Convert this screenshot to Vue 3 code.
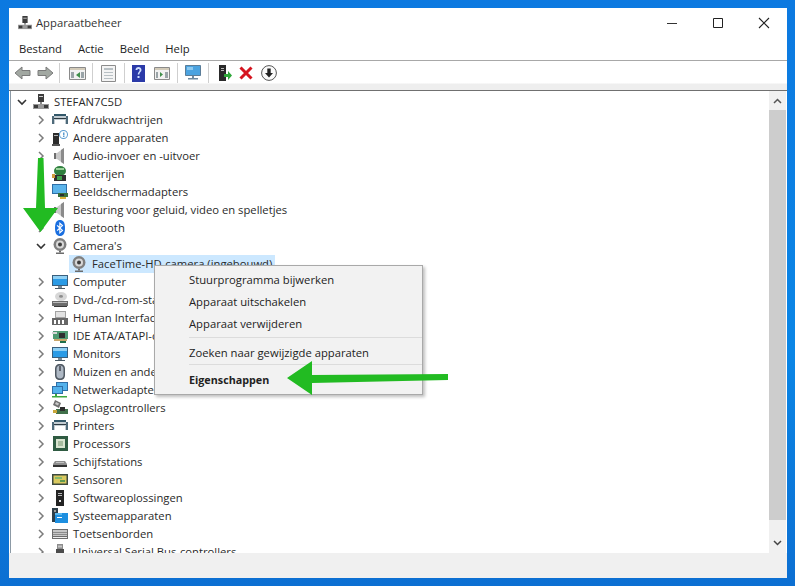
<script setup>
const r = (x, y, w, h) => `M${x} ${y}h${w}v${h}h${-w}z`

const monitor = [
  ['#3a5f7d', r(0, 1, 16, 11)],
  ['#2b9be6', r(1, 2, 14, 9)],
  ['#8fd0f4', r(1, 2, 14, 3)],
  ['#7a8a96', r(6, 12, 4, 2)],
  ['#4a5a66', r(3, 14, 10, 1)],
]
const speaker = [
  ['#c9c9c9', 'M12 0L5 5H2v6h3l7 5z'],
  ['#8b8b8b', 'M12 0v16l-3-2V2z'],
  ['#6f6f6f', r(2, 5, 2, 6)],
]
const camera = [
  ['#7f7f7f', 'M8 0a6.500 6.500 0 1 1 0 13a6.500 6.500 0 1 1 0-13z'],
  ['#d8d8d8', 'M8 2.500a4 4 0 1 1 0 8a4 4 0 1 1 0-8z'],
  ['#3d3d3d', 'M8 4.500a2 2 0 1 1 0 4a2 2 0 1 1 0-4z'],
  ['#6c6c6c', r(7, 13, 2, 1.500)],
  ['#6c6c6c', r(4, 14.500, 8, 1.500)],
]
const printer = [
  ['#33586a', r(2, 2, 12, 2)],
  ['#c2ccd2', r(0, 4, 16, 8)],
  ['#4e6a7a', r(0, 4, 2, 8)],
  ['#4e6a7a', r(14, 4, 2, 8)],
  ['#ffffff', r(3, 8, 10, 5)],
  ['#2e3a42', r(2, 6, 12, 1)],
]

const icons = {
  root: [
    ['#3c3c3c', r(5, 0, 6, 8)],
    ['#8a8a8a', r(7, 8, 2, 2)],
    ['#9a9a9a', r(0, 10, 16, 5)],
    ['#3c3c3c', r(1, 11, 4, 3)],
    ['#3c3c3c', r(11, 11, 4, 3)],
    ['#d0d0d0', r(6, 2, 4, 1)],
  ],
  printer,
  unknown: [
    ['#2c2c2c', r(1, 3, 6, 11)],
    ['#555555', r(0, 14, 8, 2)],
    ['#b4b4b4', r(2, 5, 4, 1)],
    ['#5b9bd0', 'M11.500 0a4.500 4.500 0 1 1 0 9a4.500 4.500 0 1 1 0-9zM11.500 1a3.500 3.500 0 1 0 0 7a3.500 3.500 0 1 0 0-7z'],
    ['#5b9bd0', r(11, 2.500, 1.500, 3)],
    ['#5b9bd0', r(11, 6, 1.500, 1)],
  ],
  speaker,
  battery: [
    ['#2f7f3e', 'M8 0a6 5 0 1 1 0 10a6 5 0 1 1 0-10z'],
    ['#9ad29a', r(4, 2, 8, 2)],
    ['#2f2f2f', r(2, 9, 12, 6)],
    ['#d09a3a', r(0, 8, 3, 4)],
    ['#3fa04a', r(5, 10, 5, 4)],
  ],
  adapter: [
    ['#2f6fa8', r(0, 0, 15, 10)],
    ['#5cb4ea', r(1, 1, 13, 8)],
    ['#39703c', r(6, 9, 10, 4)],
    ['#d8b23a', r(8, 13, 6, 2)],
    ['#2d2d2d', r(8, 10, 4, 2)],
  ],
  bluetooth: [
    ['#1a6fe0', 'M8 0c3 0 5 2 5 8s-2 8-5 8s-5-2-5-8s2-8 5-8z'],
    ['#ffffff', 'M7.300 2l4 3.400L8.700 8l2.600 2.600l-4 3.400V9.400L5.400 11l-.7-.8L7 8L4.700 5.800l.7-.8l1.900 1.600zM8.400 4.500v2.300l1.300-1.100zM8.400 9.200v2.300l1.300-1.200z'],
  ],
  camera,
  computer: monitor,
  dvd: [
    ['#d7d7d7', 'M9 0a6 4.500 0 1 1 0 9a6 4.500 0 1 1 0-9z'],
    ['#8d8d8d', 'M9 3a2 1.400 0 1 1 0 2.800a2 1.400 0 1 1 0-2.800z'],
    ['#6d6d6d', r(0, 9, 16, 5)],
    ['#bcbcbc', r(1, 10, 14, 1)],
    ['#3a3a3a', r(2, 14, 13, 1)],
  ],
  hid: [
    ['#a3a3a3', r(3, 1, 11, 7)],
    ['#e2e2e2', r(4, 2, 9, 5)],
    ['#676767', r(0, 8, 16, 7)],
    ['#ffffff', r(2, 10, 2, 4)],
    ['#ffffff', r(6, 10, 2, 4)],
    ['#ffffff', r(10, 10, 2, 4)],
  ],
  ide: [
    ['#4f9a72', r(1, 3, 15, 8)],
    ['#2f2f2f', r(7, 5, 6, 5)],
    ['#c9a66a', r(2, 11, 13, 2)],
    ['#d6d6d6', r(0, 4, 5, 2)],
    ['#1f6f4a', r(8, 13, 6, 2)],
  ],
  monitor,
  mouse: [
    ['#4f5862', 'M8 0c3.500 0 5 2 5 5v6c0 3-1.500 5-5 5s-5-2-5-5V5c0-3 1.500-5 5-5z'],
    ['#aeb8c4', 'M8 1.500c2.300 0 3.500 1.500 3.500 3.500v6c0 2-1.200 3.500-3.500 3.500s-3.500-1.500-3.500-3.500V5c0-2 1.200-3.500 3.500-3.500z'],
    ['#4a4f58', r(7.200, 2, 1.600, 5)],
  ],
  network: [
    ['#2f6fa8', r(4, 0, 12, 9)],
    ['#53b2ec', r(5, 1, 10, 7)],
    ['#2f6fa8', r(0, 4, 11, 8)],
    ['#53b2ec', r(1, 5, 9, 6)],
    ['#3da83d', r(3, 12, 2, 2)],
    ['#3da83d', r(0, 14, 15, 1.500)],
  ],
  storage: [
    ['#6f6f6f', 'M3 0l6 3l-2 5l-6-3z'],
    ['#c8c8c8', 'M4 2l3 1.500l-1 2l-3-1.500z'],
    ['#40704a', r(4, 9, 12, 5)],
    ['#2d2d2d', r(8, 7, 5, 4)],
    ['#c8a63a', r(1, 10, 4, 3)],
  ],
  cpu: [
    ['#2f5b42', r(1, 0, 15, 15)],
    ['#d9e4d0', r(4, 3, 9, 9)],
    ['#a7bca0', r(6, 5, 5, 5)],
  ],
  drive: [
    ['#8e8e8e', 'M3 7h10l2 3v3H1v-3z'],
    ['#333333', r(1, 11, 14, 2)],
    ['#c2c2c2', r(4, 8, 8, 1)],
  ],
  sensor: [
    ['#3d4a3e', r(0, 2, 16, 11)],
    ['#d9c95f', r(1.500, 3.500, 13, 8)],
    ['#86b86a', r(3, 5, 7, 2)],
    ['#5f9a50', r(8, 8, 5, 2)],
  ],
  software: [
    ['#232323', r(4, 0, 8, 16)],
    ['#b8b8b8', r(6, 3, 4, 1)],
    ['#b8b8b8', r(6, 5, 4, 1)],
    ['#e8e8e8', r(7, 10, 2, 2)],
  ],
  system: [
    ['#2f3f4a', r(0, 0, 6, 14)],
    ['#9a9a9a', r(2, 2, 2, 2)],
    ['#1d8fe0', r(3, 5, 13, 10)],
    ['#5ab8f0', r(3, 5, 7, 2)],
    ['#ffffff', r(5, 9, 5, 1)],
  ],
  keyboard: [
    ['#6d6d6d', r(0, 3, 16, 10)],
    ['#c7c7c7', r(1, 4, 14, 6)],
    ['#8c8c8c', r(1, 6, 14, 1)],
    ['#8c8c8c', r(1, 8, 14, 1)],
    ['#efefef', r(1, 11, 14, 1)],
  ],
  usb: [
    ['#8c8c8c', r(5, 0, 6, 5)],
    ['#ffffff', r(6.500, 1.500, 1, 2)],
    ['#ffffff', r(8.500, 1.500, 1, 2)],
    ['#4c4c4c', r(4, 5, 8, 11)],
  ],
}

const rows = [
  { level: 0, open: true, icon: 'root', label: 'STEFAN7C5D' },
  { label: 'Afdrukwachtrijen', icon: 'printer' },
  { label: 'Andere apparaten', icon: 'unknown' },
  { label: 'Audio-invoer en -uitvoer', icon: 'speaker' },
  { label: 'Batterijen', icon: 'battery' },
  { label: 'Beeldschermadapters', icon: 'adapter' },
  { label: 'Besturing voor geluid, video en spelletjes', icon: 'speaker' },
  { label: 'Bluetooth', icon: 'bluetooth' },
  { label: "Camera's", icon: 'camera', open: true },
  { level: 2, selected: true, label: 'FaceTime-HD-camera (ingebouwd)', icon: 'camera' },
  { label: 'Computer', icon: 'computer' },
  { label: 'Dvd-/cd-rom-stations', icon: 'dvd' },
  { label: 'Human Interface Devices', icon: 'hid' },
  { label: 'IDE ATA/ATAPI-controllers', icon: 'ide' },
  { label: 'Monitors', icon: 'monitor' },
  { label: 'Muizen en andere aanwijsapparaten', icon: 'mouse' },
  { label: 'Netwerkadapters', icon: 'network' },
  { label: 'Opslagcontrollers', icon: 'storage' },
  { label: 'Printers', icon: 'printer' },
  { label: 'Processors', icon: 'cpu' },
  { label: 'Schijfstations', icon: 'drive' },
  { label: 'Sensoren', icon: 'sensor' },
  { label: 'Softwareoplossingen', icon: 'software' },
  { label: 'Systeemapparaten', icon: 'system' },
  { label: 'Toetsenborden', icon: 'keyboard' },
  { label: 'Universal Serial Bus-controllers', icon: 'usb' },
].map((row) => ({ level: 1, ...row }))

const menus = ['Bestand', 'Actie', 'Beeld', 'Help']
</script>

<template>
  <div class="desktop">
    <div class="window">
      <header class="titlebar">
        <svg class="title-icon" width="14" height="16" viewBox="0 0 16 16">
          <path v-for="(p, i) in icons.root" :key="i" :fill="p[0]" :d="p[1]" />
        </svg>
        <span class="title">Apparaatbeheer</span>
        <div class="controls">
          <svg width="46" height="12" viewBox="0 0 46 12"><path d="M18 6.500h10" stroke="#333" fill="none" /></svg>
          <svg width="46" height="12" viewBox="0 0 46 12"><path d="M18.500 1.500h9v9h-9z" stroke="#222" fill="none" /></svg>
          <svg width="46" height="12" viewBox="0 0 46 12"><path d="M18 1l10 10M28 1L18 11" stroke="#222" fill="none" stroke-width="1.100" /></svg>
        </div>
      </header>

      <nav class="menubar">
        <span v-for="m in menus" :key="m">{{ m }}</span>
      </nav>

      <div class="toolbar">
        <svg class="tool t-back" width="17" height="16" viewBox="0 0 17 16"><path fill="#a2a8a2" stroke="#7a7a7a" d="M1 8l7-6v3.500h8v5H8V14z" /></svg>
        <svg class="tool t-fwd" width="17" height="16" viewBox="0 0 17 16"><path fill="#a2a8a2" stroke="#7a7a7a" d="M16 8L9 2v3.500H1v5h8V14z" /></svg>
        <i class="sep s1"></i>
        <svg class="tool t-a" width="17" height="15" viewBox="0 0 17 15"><path fill="#f2f2f2" stroke="#8a8a8a" d="M.5 1.500h16v12H.5z" /><path fill="#b4a47f" d="M1 2h15v2H1z" opacity=".5" /><path fill="#3f8f4a" d="M11 6L7 9l4 3z" /><path fill="#9aa4a8" d="M2 6h3v6H2zM12 6h3v6h-3z" /></svg>
        <i class="sep s2"></i>
        <svg class="tool t-b" width="15" height="17" viewBox="0 0 15 17"><path fill="#f4f4f4" stroke="#8c8c8c" d="M.5.500h14v16H.5z" /><path fill="#b8c0c4" d="M3 3h9v2H3zM3 7h9v1H3zM3 10h9v1H3zM3 13h9v1H3z" /></svg>
        <i class="sep s3"></i>
        <svg class="tool t-help" width="13" height="17" viewBox="0 0 13 17"><path fill="#2b3aa8" d="M0 0h13v17H0z" /><path fill="#cfe0ff" d="M5.500 11h2v2h-2zM3.500 5c0-4 6-4 6 0c0 2-2 2-2.200 4.500H5.700C5.800 7 7.700 6.500 7.700 5c0-1.500-2.400-1.500-2.400 0z" /></svg>
        <svg class="tool t-c" width="16" height="15" viewBox="0 0 16 15"><path fill="#f2f2f2" stroke="#8a8a8a" d="M.5 1.500h15v12H.5z" /><path fill="#b4a47f" d="M1 2h14v2H1z" opacity=".5" /><path fill="#3f8f4a" d="M6 6l3 2.500L6 11z" /><path fill="#9aa4a8" d="M2 6h2v6H2zM11 6h3v6h-3z" /></svg>
        <i class="sep s4"></i>
        <svg class="tool t-d" width="16" height="16" viewBox="0 0 16 16"><path fill="#4ba3e0" stroke="#5b7d98" d="M.5.500h15v10H.5z" /><path fill="#8cc9f0" d="M2 2h6v3H2z" /><path fill="#6d8aa0" d="M7 11h2v2H7zM3 13h10v1.500H3z" /></svg>
        <i class="sep s5"></i>
        <svg class="tool t-e" width="14" height="16" viewBox="0 0 14 16"><path fill="#2a2a2a" d="M1 0h7v16H1z" /><path fill="#b8b8b8" d="M3 3h3v1H3zM3 5h3v1H3z" /><path fill="#2fa83a" d="M6 9h4V6l4 4.500L10 15v-3H6z" /></svg>
        <svg class="tool t-x" width="14" height="14" viewBox="0 0 14 14"><path stroke="#d5141f" stroke-width="3" fill="none" d="M1.500 1.500l11 11M12.500 1.500l-11 11" /></svg>
        <svg class="tool t-dl" width="16" height="16" viewBox="0 0 16 16"><circle cx="8" cy="8" r="7.400" fill="#fafafa" stroke="#555" /><path fill="#222" d="M6.300 3.500h3.400V8H12l-4 4.500L4 8h2.300z" /></svg>
      </div>

      <main class="content">
        <div class="tree">
          <div v-for="row in rows" :key="row.label" class="row" :class="'level-' + row.level">
            <span class="toggle">
              <svg v-if="row.open" width="10" height="10" viewBox="0 0 10 10"><path d="M1 3l4 4l4-4" fill="none" stroke="#333" stroke-width="1.600" /></svg>
              <svg v-else-if="row.level === 1" width="10" height="10" viewBox="0 0 10 10"><path d="M3 1l4 4l-4 4" fill="none" stroke="#7c7c7c" stroke-width="1.500" /></svg>
            </span>
            <span class="item" :class="{ selected: row.selected }">
              <svg width="16" height="16" viewBox="0 0 16 16">
                <path v-for="(p, i) in icons[row.icon]" :key="i" :fill="p[0]" :d="p[1]" />
              </svg>
              <span class="label">{{ row.label }}</span>
            </span>
          </div>
        </div>

        <div class="scrollbar">
          <div class="sb-btn up"><svg width="9" height="6" viewBox="0 0 9 6"><path d="M1 5l3.500-3.500L8 5" fill="none" stroke="#555" stroke-width="1.500" /></svg></div>
          <div class="thumb"></div>
          <div class="sb-space"></div>
          <div class="sb-btn down"><svg width="9" height="6" viewBox="0 0 9 6"><path d="M1 1l3.500 3.500L8 1" fill="none" stroke="#444" stroke-width="1.500" /></svg></div>
        </div>

        <div class="context-menu">
          <div class="mi">Stuurprogramma bijwerken</div>
          <div class="mi">Apparaat uitschakelen</div>
          <div class="mi">Apparaat verwijderen</div>
          <hr class="hr-a" />
          <div class="mi">Zoeken naar gewijzigde apparaten</div>
          <hr class="hr-b" />
          <div class="mi strong">Eigenschappen</div>
        </div>
      </main>

      <footer class="statusbar"></footer>
    </div>

    <svg class="arrow arrow-down" width="36" height="76" viewBox="0 0 36 76"><path fill="#22bb22" d="M15 0h5.500l1.500 50h13L17.500 74L0 50h13z" /></svg>
    <svg class="arrow arrow-left" width="162" height="36" viewBox="0 0 162 36"><path fill="#22bb22" d="M0 18L25 1v14l136-1v6L25 23v12z" /></svg>
  </div>
</template>

<style>
html, body { margin: 0; }
</style>

<style scoped>
.desktop {
  position: relative;
  width: 795px;
  height: 586px;
  box-sizing: border-box;
  padding: 8px 8px 8px 9px;
  overflow: hidden;
  background: linear-gradient(180deg, #0c79e0 0%, #0b86e6 60%, #0c6fd2 100%);
  font-family: "Open Sans", "Noto Sans", sans-serif;
  font-size: 11.25px;
  color: #222;
}
.window {
  display: flex;
  flex-direction: column;
  height: 570px;
  background: #fff;
}
.titlebar {
  display: flex;
  align-items: center;
  height: 29px;
  padding-left: 9px;
  flex: none;
}
.title-icon { margin-right: 4px; }
.title { color: #333; }
.controls {
  display: flex;
  margin-left: auto;
}
.menubar {
  display: flex;
  gap: 16px;
  align-items: center;
  height: 23px;
  padding: 0 0 0 10px;
  flex: none;
  border-bottom: 1px solid #a8a8a8;
}
.toolbar {
  display: flex;
  align-items: center;
  flex: none;
  height: 29px;
  padding-left: 5px;
  border-bottom: 1px solid #707070;
  background: linear-gradient(180deg, #fff 0, #fff 22px, #eeeeee 23px);
}
.tool { flex: none; margin-bottom: 5px; }
.t-fwd { margin-left: 6px; }
.sep {
  flex: none;
  width: 1px;
  height: 20px;
  margin-bottom: 5px;
  background: #cfcfcf;
}
.s1 { margin-left: 5px; }
.t-a { margin-left: 9px; }
.s2 { margin-left: 6px; }
.t-b { margin-left: 8px; }
.s3 { margin-left: 8px; }
.t-help { margin-left: 7px; }
.t-c { margin-left: 9px; }
.s4 { margin-left: 7px; }
.t-d { margin-left: 7px; }
.s5 { margin-left: 7px; }
.t-e { margin-left: 9px; }
.t-x { margin-left: 7px; }
.t-dl { margin-left: 8px; }

.content {
  position: relative;
  display: flex;
  flex: 1;
  min-height: 0;
  margin: 0 1px;
  border-left: 1px solid #8c9aa6;
  overflow: hidden;
}
.tree {
  flex: 1;
  min-width: 0;
  padding-top: 2px;
}
.row {
  display: flex;
  align-items: center;
  height: 18px;
  white-space: nowrap;
}
.level-0 { padding-left: 3px; }
.level-1 { padding-left: 22px; }
.level-2 { padding-left: 41px; }
.toggle {
  display: flex;
  align-items: center;
  justify-content: center;
  flex: none;
  width: 16px;
}
.item {
  display: flex;
  align-items: center;
  gap: 5px;
  height: 18px;
  margin-left: 3px;
}
.selected {
  margin-left: 1px;
  padding: 0 3px 0 2px;
  background: #cce8ff;
}
.label {
  padding-bottom: 2px;
  color: #2a2a2a;
}

.scrollbar {
  display: flex;
  flex-direction: column;
  flex: none;
  width: 17px;
  background: #f0f0f0;
}
.sb-btn {
  display: flex;
  align-items: center;
  justify-content: center;
  flex: none;
}
.up { height: 19px; }
.down { height: 20px; }
.thumb {
  flex: none;
  height: 410px;
  background: #cdcdcd;
}
.sb-space { flex: 1; }

.context-menu {
  position: absolute;
  left: 143px;
  top: 174px;
  width: 269px;
  height: 130px;
  box-sizing: border-box;
  padding-top: 3px;
  background: #f2f2f2;
  border: 1px solid #a9a9a9;
  box-shadow: 2px 2px 3px rgba(0, 0, 0, 0.25);
}
.mi {
  display: flex;
  align-items: center;
  box-sizing: border-box;
  height: 22px;
  padding: 0 0 2px 34px;
  color: #222;
}
.strong {
  font-size: 10.75px;
  font-weight: 700;
}
hr {
  height: 1px;
  border: 0;
  background: #dcdcdc;
}
.hr-a { margin: 2px 0 4px 34px; }
.hr-b { margin: 0 0 5px 34px; }
.statusbar {
  flex: none;
  height: 25px;
  background: #f0f0f0;
}
.arrow { position: absolute; }
.arrow-down { left: 23px; top: 158px; }
.arrow-left { left: 287px; top: 360px; }
</style>
